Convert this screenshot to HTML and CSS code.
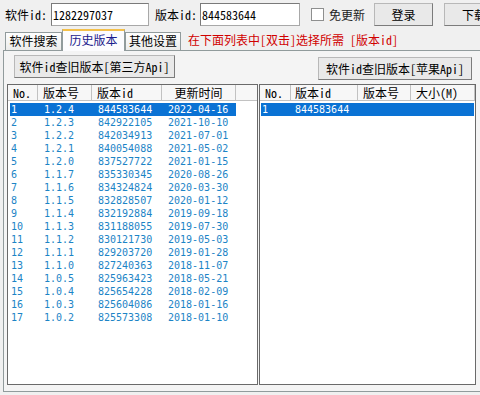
FILE: index.html
```html
<!DOCTYPE html>
<html lang="zh-CN">
<head>
    <meta charset="UTF-8">
    <title>历史版本</title>
    <link rel="stylesheet" href="styles.css">
</head>
<body>
    <div class="topbar">
        <span class="label label-app">软件id:</span>
        <input class="field field-app" type="text" value="1282297037">
        <span class="label label-ver">版本id:</span>
        <input class="field field-ver" type="text" value="844583644">
        <label class="check"><span class="check-box"></span><span class="check-text">免更新</span></label>
        <button class="btn btn-login">登录</button>
        <button class="btn btn-download">下载</button>
    </div>

    <div class="tabrow">
        <div class="tab tab-search">软件搜索</div>
        <div class="tab tab-history active">历史版本</div>
        <div class="tab tab-settings">其他设置</div>
        <div class="tip">在下面列表中[双击]选择所需 [版本id]</div>
    </div>

    <div class="panel">
        <div class="actions">
            <button class="btn btn-third">软件id查旧版本[第三方Api]</button>
            <button class="btn btn-apple">软件id查旧版本[苹果Api]</button>
        </div>

        <div class="lists">
            <div class="list list-left">
                <div class="list-head">
                    <div class="hcell l1">No.</div>
                    <div class="hcell l2">版本号</div>
                    <div class="hcell l3">版本id</div>
                    <div class="hcell l4 center">更新时间</div>
                    <div class="hcell filler"></div>
                </div>
                <div class="list-body" id="left-rows"></div>
            </div>

            <div class="list list-right">
                <div class="list-head">
                    <div class="hcell r1">No.</div>
                    <div class="hcell r2">版本id</div>
                    <div class="hcell r3">版本号</div>
                    <div class="hcell r4">大小(M)</div>
                </div>
                <div class="list-body">
                    <div class="row selected">
                        <span class="cell r1">1</span>
                        <span class="cell r2">844583644</span>
                        <span class="cell r3"></span>
                        <span class="cell r4"></span>
                    </div>
                </div>
            </div>
        </div>
    </div>

    <script>
        const versions = [
            ['1.2.4', '844583644', '2022-04-16'],
            ['1.2.3', '842922105', '2021-10-10'],
            ['1.2.2', '842034913', '2021-07-01'],
            ['1.2.1', '840054088', '2021-05-02'],
            ['1.2.0', '837527722', '2021-01-15'],
            ['1.1.7', '835330345', '2020-08-26'],
            ['1.1.6', '834324824', '2020-03-30'],
            ['1.1.5', '832828507', '2020-01-12'],
            ['1.1.4', '832192884', '2019-09-18'],
            ['1.1.3', '831188055', '2019-07-30'],
            ['1.1.2', '830121730', '2019-05-03'],
            ['1.1.1', '829203720', '2019-01-28'],
            ['1.1.0', '827240363', '2018-11-07'],
            ['1.0.5', '825963423', '2018-05-21'],
            ['1.0.4', '825654228', '2018-02-09'],
            ['1.0.3', '825604086', '2018-01-16'],
            ['1.0.2', '825573308', '2018-01-10']
        ];

        const body = document.getElementById('left-rows');
        versions.forEach((v, i) => {
            const row = document.createElement('div');
            row.className = 'row' + (i === 0 ? ' selected' : '');
            row.innerHTML =
                '<span class="cell l1">' + (i + 1) + '</span>' +
                '<span class="cell l2">' + v[0] + '</span>' +
                '<span class="cell l3">' + v[1] + '</span>' +
                '<span class="cell l4">' + v[2] + '</span>';
            body.appendChild(row);
        });
    </script>
</body>
</html>
```

FILE: styles.css
```css
body {
    margin: 0;
    width: 480px;
    height: 395px;
    overflow: hidden;
    background: #f0f0f0;
    color: #000;
    font-family: "Noto Sans Mono CJK SC", "Noto Sans CJK SC", monospace;
    font-size: 12px;
}

button, input {
    font-family: inherit;
    font-size: 12px;
}

/* top bar */
.topbar {
    display: flex;
    align-items: center;
    height: 23px;
    padding: 3px 0 0 5px;
    white-space: nowrap;
}

.label {
    flex: none;
}

.label-app {
    width: 46px;
}

.label-ver {
    width: 45px;
}

.field {
    flex: none;
    box-sizing: border-box;
    height: 23px;
    margin: 0;
    padding: 0 1px;
    background: #fff;
    border: 1px solid #a8a8a8;
    border-top-color: #7a7a7a;
    border-left-color: #7a7a7a;
    color: #000;
}

.field-app {
    width: 98px;
    margin-right: 6px;
}

.field-ver {
    width: 100px;
}

.check {
    display: flex;
    align-items: center;
    margin-left: 11px;
}

.check-box {
    width: 11px;
    height: 11px;
    background: #fff;
    border: 1px solid #8e8f8f;
}

.check-text {
    margin-left: 5px;
    color: #222;
}

.btn {
    flex: none;
    box-sizing: border-box;
    height: 23px;
    margin: 0;
    padding: 0;
    background: #e9e9e9;
    border: 1px solid #b8b8b8;
    border-right-color: #7c7c7c;
    border-bottom-color: #7c7c7c;
    color: #000;
}

.btn-login {
    width: 59px;
    margin-left: 9px;
}

.btn-download {
    width: 60px;
    margin-left: 11px;
}

/* tabs */
.tabrow {
    display: flex;
    align-items: flex-end;
    height: 21px;
    margin-top: 3px;
    padding-left: 5px;
}

.tab {
    box-sizing: border-box;
    height: 18px;
    line-height: 16px;
    text-align: center;
    border: 1px solid #919b9c;
    border-bottom: none;
    background: linear-gradient(#fefefe, #ececeb);
    position: relative;
    z-index: 1;
}

.tab-search {
    width: 57px;
}

.tab-settings {
    width: 56px;
}

.tab.active {
    width: 63px;
    height: 22px;
    margin-bottom: -1px;
    line-height: 18px;
    border-top: 2px solid #f4c04a;
    background: #fcfcfe;
    color: #1b1b8c;
    z-index: 2;
}

.tip {
    align-self: center;
    margin-left: 7px;
    color: #d00000;
}

/* panel */
.panel {
    box-sizing: border-box;
    width: 480px;
    height: 342px;
    margin-left: 3px;
    border: 1px solid #919b9c;
    background: #f4f4f4;
}

.actions {
    display: flex;
    justify-content: space-between;
    align-items: flex-start;
    height: 29px;
    padding: 4px 10px 0 10px;
}

.btn-third {
    width: 161px;
}

.btn-apple {
    width: 154px;
    margin-top: 2px;
}

.lists {
    display: flex;
    gap: 1px;
    padding-left: 3px;
}

.list {
    box-sizing: border-box;
    height: 301px;
    background: #fff;
    border: 1px solid #6a6a6a;
    overflow: hidden;
}

.list-left {
    width: 251px;
}

.list-right {
    width: 217px;
}

.list-head {
    display: flex;
    height: 16px;
    background: #f7f7f7;
}

.hcell {
    flex: none;
    box-sizing: border-box;
    padding-left: 5px;
    line-height: 15px;
    border-right: 1px solid #c2c2c2;
    border-bottom: 1px solid #c2c2c2;
}

.hcell.center {
    text-align: center;
    padding-left: 0;
}

.hcell.filler {
    flex: 1;
    border-right: none;
}

.hcell.l1 { width: 30px; }
.hcell.l2 { width: 54px; }
.hcell.l3 { width: 70px; }
.hcell.l4 { width: 74px; }

.hcell.r1 { width: 31px; }
.hcell.r2 { width: 67px; padding-left: 4px; }
.hcell.r3 { width: 53px; }
.hcell.r4 { width: 64px; }

.list-body {
    padding-top: 2px;
}

.row {
    display: flex;
    height: 13px;
    line-height: 13px;
    margin-left: 2px;
    color: #1c84c6;
    font-family: "DejaVu Sans Mono", monospace;
    font-size: 10px;
}

.row.selected {
    background: #0a72d4;
    color: #fff;
}

.list-left .row {
    width: 226px;
}

.list-right .row {
    width: 213px;
    margin-left: 1px;
}

.cell {
    flex: none;
    box-sizing: border-box;
    padding-left: 6px;
    white-space: nowrap;
}

.cell.l1 { width: 28px; padding-left: 1px; }
.cell.l2 { width: 54px; }
.cell.l3 { width: 70px; }
.cell.l4 { width: 74px; }

.cell.r1 { width: 30px; padding-left: 1px; }
.cell.r2 { width: 67px; padding-left: 4px; }
.cell.r3 { width: 53px; }
.cell.r4 { width: 63px; }
```
